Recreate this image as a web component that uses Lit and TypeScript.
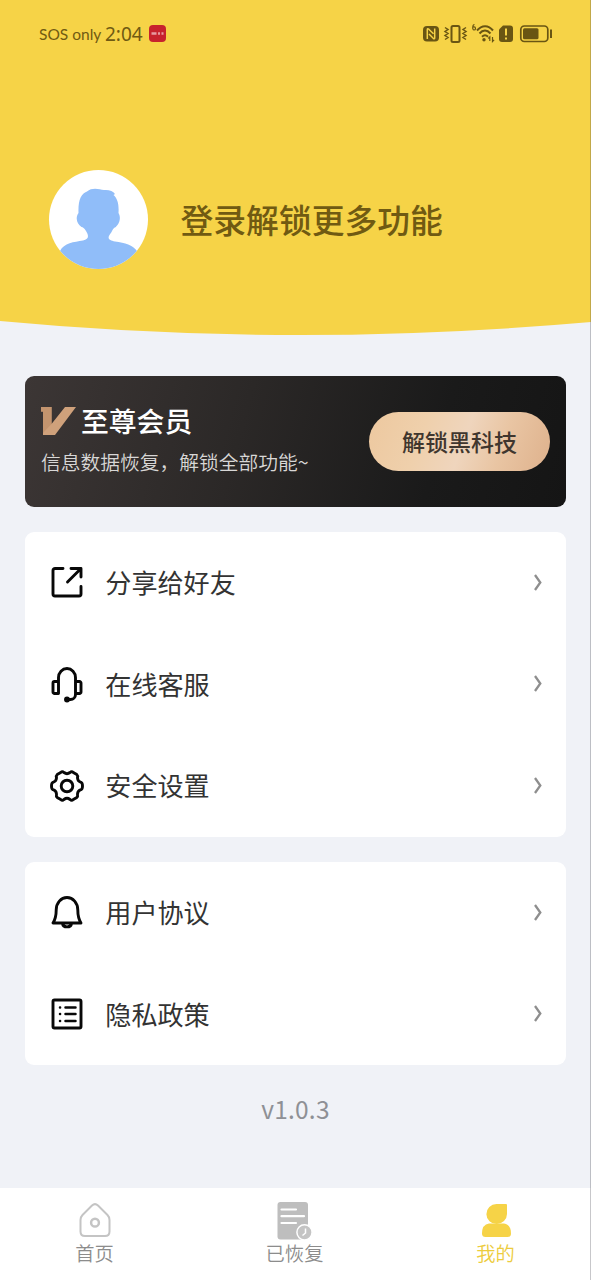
import { LitElement, html, css, svg, TemplateResult } from 'lit';
import { customElement, property } from 'lit/decorators.js';

const icons: Record<string, TemplateResult> = {
  share: svg`<path d="M13 3.500H5a2 2 0 0 0-2 2V29a2 2 0 0 0 2 2h24a2 2 0 0 0 2-2v-7.500M21 3.500h10V12M30.500 4 17.500 17"/>`,
  service: svg`<path d="M8.500 26.500V10.500a8.500 9 0 0 1 17 0V27.500a5 5 0 0 1-5 5h-3M8.500 14.500H4.500a1.500 1.500 0 0 0-1.500 1.500V25a1.500 1.500 0 0 0 1.500 1.500h4M25.500 14.500H29.500a1.500 1.500 0 0 1 1.500 1.500V25a1.500 1.500 0 0 1-1.500 1.500h-4"/><circle cx="17" cy="32.500" r="1.500" fill="#080808"/>`,
  settings: svg`<path d="M10.700 3.500Q12.300 2 14 3.500Q17 5.800 20 3.500Q21.700 2 23.300 3.500L26.800 5.500Q28 6.500 27.500 9Q27.800 12.500 31 13.300Q32.500 14 32.500 17Q32.500 20 31 20.700Q27.800 21.500 27.500 25Q28 27.500 26.800 28.500L23.300 30.500Q21.700 32 20 30.500Q17 28.200 14 30.500Q12.300 32 10.700 30.500L7.200 28.500Q6 27.500 6.500 25Q6.200 21.500 3 20.700Q1.500 20 1.500 17Q1.500 14 3 13.300Q6.200 12.500 6.500 9Q6 6.500 7.200 5.500Z"/><circle cx="17" cy="17" r="5.800"/>`,
  bell: svg`<path d="M3 28c2.500-4 3.200-7 3.200-13a10.800 12.500 0 0 1 21.600 0c0 6 .7 9 3.200 13ZM12.500 28.500c.5 4.500 8.500 4.500 9 0"/>`,
  policy: svg`<rect x="3" y="3" width="28" height="28" rx="1.500"/><path stroke-width="2.500" d="M15.500 10.500h10M15.500 17h10M15.500 24h10M10 10.500h.1M10 17h.1M10 24h.1"/>`,
};

@customElement('menu-row')
class MenuRow extends LitElement {
  @property() icon = '';
  @property() label = '';

  static styles = css`
    :host { display: flex; align-items: center; height: 101.67px; padding: 0 23.500px 0 25px; box-sizing: border-box; }
    .icon { width: 34px; height: 35px; flex: none; fill: none; stroke: #080808; stroke-width: 2.900; stroke-linecap: round; stroke-linejoin: round; overflow: visible; }
    .label { flex: 1; margin: 0 0 1.500px 21.300px; font-size: 26.100px; line-height: 36px; color: #333; }
    .arrow { width: 10px; height: 18px; fill: none; stroke: #8e8e8e; stroke-width: 2.300; }
  `;

  render() {
    return html`
      <svg class="icon" viewBox="0 0 34 35">${icons[this.icon]}</svg>
      <span class="label">${this.label}</span>
      <svg class="arrow" viewBox="0 0 10 18"><path d="M2 1 7.300 8.500 2 16"/></svg>
    `;
  }
}

@customElement('app-root')
class AppRoot extends LitElement {
  static styles = css`
    :host { display: block; font-family: "Noto Sans CJK SC", sans-serif; }
    .page { position: relative; width: 591px; height: 1280px; display: flex; flex-direction: column; background: #f0f2f7; overflow: hidden; }
    .page::after { content: ''; position: absolute; top: 0; right: 0; width: 1px; height: 100%; background: rgba(70, 70, 80, .3); }
    .header { height: 335px; flex: none; background: #f6d347; clip-path: path('M0 0H591V322Q443 335 300 335Q148 335 0 321Z'); }
    .status { display: flex; align-items: center; justify-content: space-between; height: 67px; padding: 0 38px 0 39px; color: #705a12; }
    .left { display: flex; align-items: center; }
    .sos { width: 63px; font: 15.500px/20px Lato, sans-serif; letter-spacing: 0; white-space: nowrap; }
    .time { font: 20px/24px "Noto Sans", sans-serif; margin-left: 3px; width: 40px; white-space: nowrap; }
    .clock { display: block; transform: scaleX(.95); transform-origin: left; }
    .badge { width: 17px; height: 17px; margin-left: 4px; }
    .indicators { width: 131px; height: 24px; }
    .profile { display: flex; align-items: center; gap: 32.500px; padding: 103px 0 0 49px; }
    .avatar { width: 99px; height: 99px; border-radius: 50%; background: #fff; overflow: hidden; }
    .avatar svg { display: block; }
    .login { margin-bottom: 2px; font-size: 32.800px; line-height: 44px; font-weight: 500; color: #705a12; }
    .vip { display: flex; align-items: center; justify-content: space-between; flex: none; height: 131px; margin: 41px 25px 0; padding: 0 16px; box-sizing: border-box; border-radius: 9px; background: linear-gradient(105deg, #3c3635 0%, #2b2827 40%, #1a1a1a 75%, #151515 100%); }
    .intro { margin-bottom: 6px; }
    .name { display: flex; align-items: center; height: 40px; gap: 5px; font-size: 27.800px; line-height: 40px; font-weight: 500; color: #fff; }
    .name span { margin-bottom: 2px; }
    .vmark { width: 35px; height: 28px; }
    .desc { margin-top: 7px; font-size: 19.750px; line-height: 28px; font-weight: 350; color: #d8d7d6; white-space: nowrap; }
    .unlock { width: 181px; height: 59px; border-radius: 30px; text-align: center; font-size: 23px; line-height: 58px; font-weight: 500; color: #40362e; background: linear-gradient(110deg, #edc89f 0%, #efd0ac 30%, #efd5bd 52%, #e9c5a3 72%, #deb18c 100%); }
    .group { flex: none; margin: 25px 25px 0; border-radius: 9px; background: #fff; }
    .version { margin-top: 26px; text-align: center; font-size: 24.500px; line-height: 36px; letter-spacing: .2px; color: #8e9095; }
    .tabs { display: grid; grid-template-columns: 189px 1fr 191px; height: 92px; flex: none; margin-top: auto; background: #fff; }
    .tab { display: flex; flex-direction: column; align-items: center; padding-top: 13px; font-size: 19.300px; line-height: 25px; color: #8c8c8c; font-weight: 350; }
    .tab svg { width: 40px; height: 40px; flex: none; }
    .tab.active { color: #edcc3c; }
  `;

  render() {
    return html`
      <div class="page">
        <div class="header">
          <div class="status">
            <div class="left">
              <span class="sos">SOS only</span>
              <span class="time"><span class="clock">2:04</span></span>
              <svg class="badge" viewBox="0 0 17 17"><rect width="17" height="17" rx="4" fill="#c7222d"/><path d="M2.500 8.500h5M9 8.500h2M12.500 8.500h2" stroke="#e69aa0" stroke-width="2.500"/></svg>
            </div>
            <svg class="indicators" viewBox="422 22 131 24" fill="none" stroke="#695513">
              <rect x="423" y="26" width="16" height="15.500" rx="4" fill="#695513" stroke="none"/>
              <path d="M427.300 39v-9.500q0-1.500 1.500-.3l4.700 4.600M434.700 28.500v9.500q0 1.500-1.500.3l-4.200-4.300" stroke="#f6d347" stroke-width="1.500"/>
              <rect x="451.500" y="26" width="8" height="16" rx="1.500" stroke-width="2"/>
              <path d="m445 27.500 3 2-3 2 3 2-3 2 3 2-3 2M466 27.500l-3 2 3 2-3 2 3 2-3 2 3 2" stroke-width="1.500"/>
              <path d="M474.500 24.500c-2 0-2.500 5.500-.5 5.500s2-3.200 0-3.200h-1.200" stroke-width="1.200"/>
              <path d="M477 30.500c5-6 11.500-5.500 16 0M479.500 33.500c3.500-4 7.500-3.800 11 0M482 36.800c2-2 4-2 6 0" stroke-width="2"/>
              <circle cx="484" cy="39.800" r="1.700" fill="#695513" stroke="none"/>
              <path d="M489.800 41v-4l-1.500 1.500M492.500 37v4.500l1.600-1.700" stroke-width="1.200"/>
              <path d="M503 25.500h7a3 3 0 0 1 3 3V39a3 3 0 0 1-3 3h-8a3 3 0 0 1-3-3v-9.500Z" fill="#695513" stroke="none"/>
              <path d="M506 28.500v7M506 37.500v2" stroke="#f6d347" stroke-width="2"/>
              <rect x="520.800" y="26" width="27" height="15.500" rx="3.500" stroke-width="1.700"/>
              <rect x="523" y="28.300" width="15.500" height="11" rx="1.500" fill="#695513" stroke="none"/>
              <path d="M551 29.500v8.500" stroke-width="2"/>
            </svg>
          </div>
          <div class="profile">
            <div class="avatar">
              <svg width="99" height="99" viewBox="0 0 99 99"><path fill="#90bdf9" d="M11 81C15 73 25 72 34 70.500C40 69 40 66 37 61C35 58 34 57 32.500 57C28 54 26 48 29.500 43C29 30 32 24 38 21.500C43 17 50 19 55 20C60 19.500 64 21 66 24L64.500 25C69 29 70 35 69.500 43C73 49 69 56 66 57.500C64 58 63 62 60.500 65C58 69 61 70.500 66 71.500C76 73 84 75 88 81L99 99H0Z"/></svg>
            </div>
            <div class="login">登录解锁更多功能</div>
          </div>
        </div>

        <div class="vip">
          <div class="intro">
            <div class="name">
              <svg class="vmark" viewBox="0 0 35 28"><path d="M0 0h10.500v17L24 0h11L14 28H2V4.500H0Z" fill="#cfa17b"/><path d="M0 0h10.500v17L2 26V4.500H0Z" fill="#c3946e"/></svg>
              <span>至尊会员</span>
            </div>
            <div class="desc">信息数据恢复，解锁全部功能~</div>
          </div>
          <div class="unlock">解锁黑科技</div>
        </div>

        <div class="group">
          <menu-row icon="share" label="分享给好友"></menu-row>
          <menu-row icon="service" label="在线客服"></menu-row>
          <menu-row icon="settings" label="安全设置"></menu-row>
        </div>
        <div class="group">
          <menu-row icon="bell" label="用户协议"></menu-row>
          <menu-row icon="policy" label="隐私政策"></menu-row>
        </div>
        <div class="version">v1.0.3</div>

        <div class="tabs">
          <div class="tab">
            <svg viewBox="0 0 40 40" fill="none" stroke="#c4c4c4"><path d="M7.500 14 17 4.500q3-2.700 6 0L32.500 14q2 2 2 5v11.500q0 4.500-4.500 4.500H10q-4.500 0-4.500-4.500V19q0-3 2-5Z" stroke-width="2"/><circle cx="20" cy="21.700" r="3.900" stroke-width="2.500"/></svg>
            <span>首页</span>
          </div>
          <div class="tab">
            <svg viewBox="0 0 40 40"><rect x="2.500" y="1" width="30.500" height="37.500" rx="3" fill="#bebebe"/><path d="M6.500 8.500h14.500M6.500 15.200h22.500M6.500 22h14.500" stroke="#fff" stroke-width="2.200" stroke-linecap="round"/><circle cx="29.500" cy="31.300" r="7.600" fill="#c4c4c4" stroke="#fff" stroke-width="1.500"/><path d="M30.500 27.500V32l-3 2.500" fill="none" stroke="#fff" stroke-width="1.500"/></svg>
            <span>已恢复</span>
          </div>
          <div class="tab active">
            <svg viewBox="0 0 40 40" fill="#f6d347"><path d="M20.500 3H30q1 0 1 1v9A10.300 10 0 1 1 20.500 3Z"/><path d="M13 22.500h15q7 1 7 10 0 3.500-3.500 3.500h-22Q6 36 6 32.500q0-9 7-10Z"/></svg>
            <span>我的</span>
          </div>
        </div>
      </div>
    `;
  }
}
